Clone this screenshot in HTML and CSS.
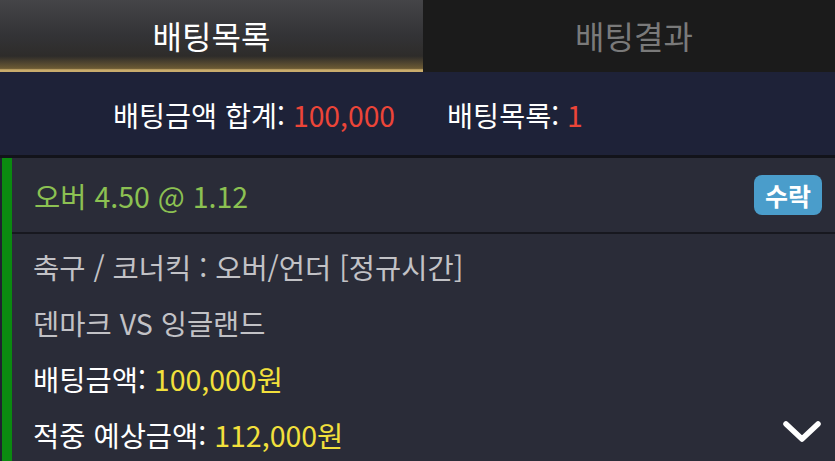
FILE: index.html
```html
<!DOCTYPE html>
<html lang="ko">
<head>
<meta charset="utf-8">
<link rel="stylesheet" href="styles.css">
</head>
<body>
<div class="tabs">
  <div class="tab active">배팅목록</div>
  <div class="tab">배팅결과</div>
</div>
<div class="summary">
  <span class="item">배팅금액 합계: <b class="red">100,000</b></span>
  <span class="item">배팅목록: <b class="red">1</b></span>
</div>
<div class="card">
  <div class="bar"></div>
  <div class="body">
    <div class="head">
      <span class="pick">오버 4.50 @ 1.12</span>
      <span class="badge">수락</span>
    </div>
    <div class="rows">
      <div class="row grey">축구 / 코너킥 : 오버/언더 [정규시간]</div>
      <div class="row grey">덴마크 VS 잉글랜드</div>
      <div class="row">배팅금액: <span class="yellow">100,000원</span></div>
      <div class="row">적중 예상금액: <span class="yellow">112,000원</span></div>
    </div>
  </div>
  <svg class="chev" viewBox="0 0 40 26" width="40" height="26"><path d="M4 5 L20 20 L36 5" fill="none" stroke="#fff" stroke-width="5.5" stroke-linecap="round" stroke-linejoin="round"/></svg>
</div>
</body>
</html>
```
FILE: styles.css
```css
* { box-sizing: border-box; }
html, body { margin: 0; padding: 0; }
body {
  width: 835px;
  height: 461px;
  overflow: hidden;
  background: #2a2c38;
  font-family: "Noto Sans CJK KR", "Noto Sans", sans-serif;
  color: #fff;
}
.tabs {
  display: flex;
  height: 72px;
}
.tab {
  display: flex;
  align-items: center;
  justify-content: center;
  font-size: 32px;
  color: #7a7a7a;
  background: #1b1b1b;
  width: 412px;
  padding-bottom: 2px;
  padding-left: 10px;
}
.tab.active {
  width: 423px;
  padding-left: 0;
  color: #fff;
  background: linear-gradient(to bottom, #454548 0%, #333336 50%, #2e2c2a 78%, #6b5a34 95%, #c9ac6c 97%, #c9ac6c 100%);
}
.summary {
  height: 86px;
  background: #1e2238;
  border-bottom: 3px solid #12131a;
  display: flex;
  justify-content: flex-start;
  align-items: center;
  gap: 52px;
  font-size: 28.3px;
  padding-left: 113px;
  padding-top: 2px;
}
.summary b { font-weight: normal; }
.red { color: #ec4538; }
.card {
  position: relative;
  display: flex;
  height: 303px;
  background: #2a2c38;
}
.bar {
  width: 12px;
  border-left: 2px solid #1f2130;
  background: #0b8a10;
  flex: none;
}
.body { flex: 1; }
.head {
  height: 76px;
  display: flex;
  align-items: center;
  justify-content: space-between;
  padding: 0 13px 0 22px;
  border-bottom: 2px solid #17181f;
}
.pick {
  color: #8cc152;
  font-size: 28.5px;
}
.badge {
  background: #4a9dcb;
  color: #fff;
  font-weight: bold;
  font-size: 25px;
  border-radius: 8px;
  padding: 0 11px;
  height: 40px;
  line-height: 40px;
}
.rows {
  padding: 5px 0 0 21px;
}
.row {
  height: 56px;
  line-height: 56px;
  font-size: 28.5px;
  color: #fff;
}
.row.grey { color: #c2c2c6; }
.yellow { color: #f2e03c; }
.chev {
  position: absolute;
  right: 13px;
  bottom: 16px;
}
```
